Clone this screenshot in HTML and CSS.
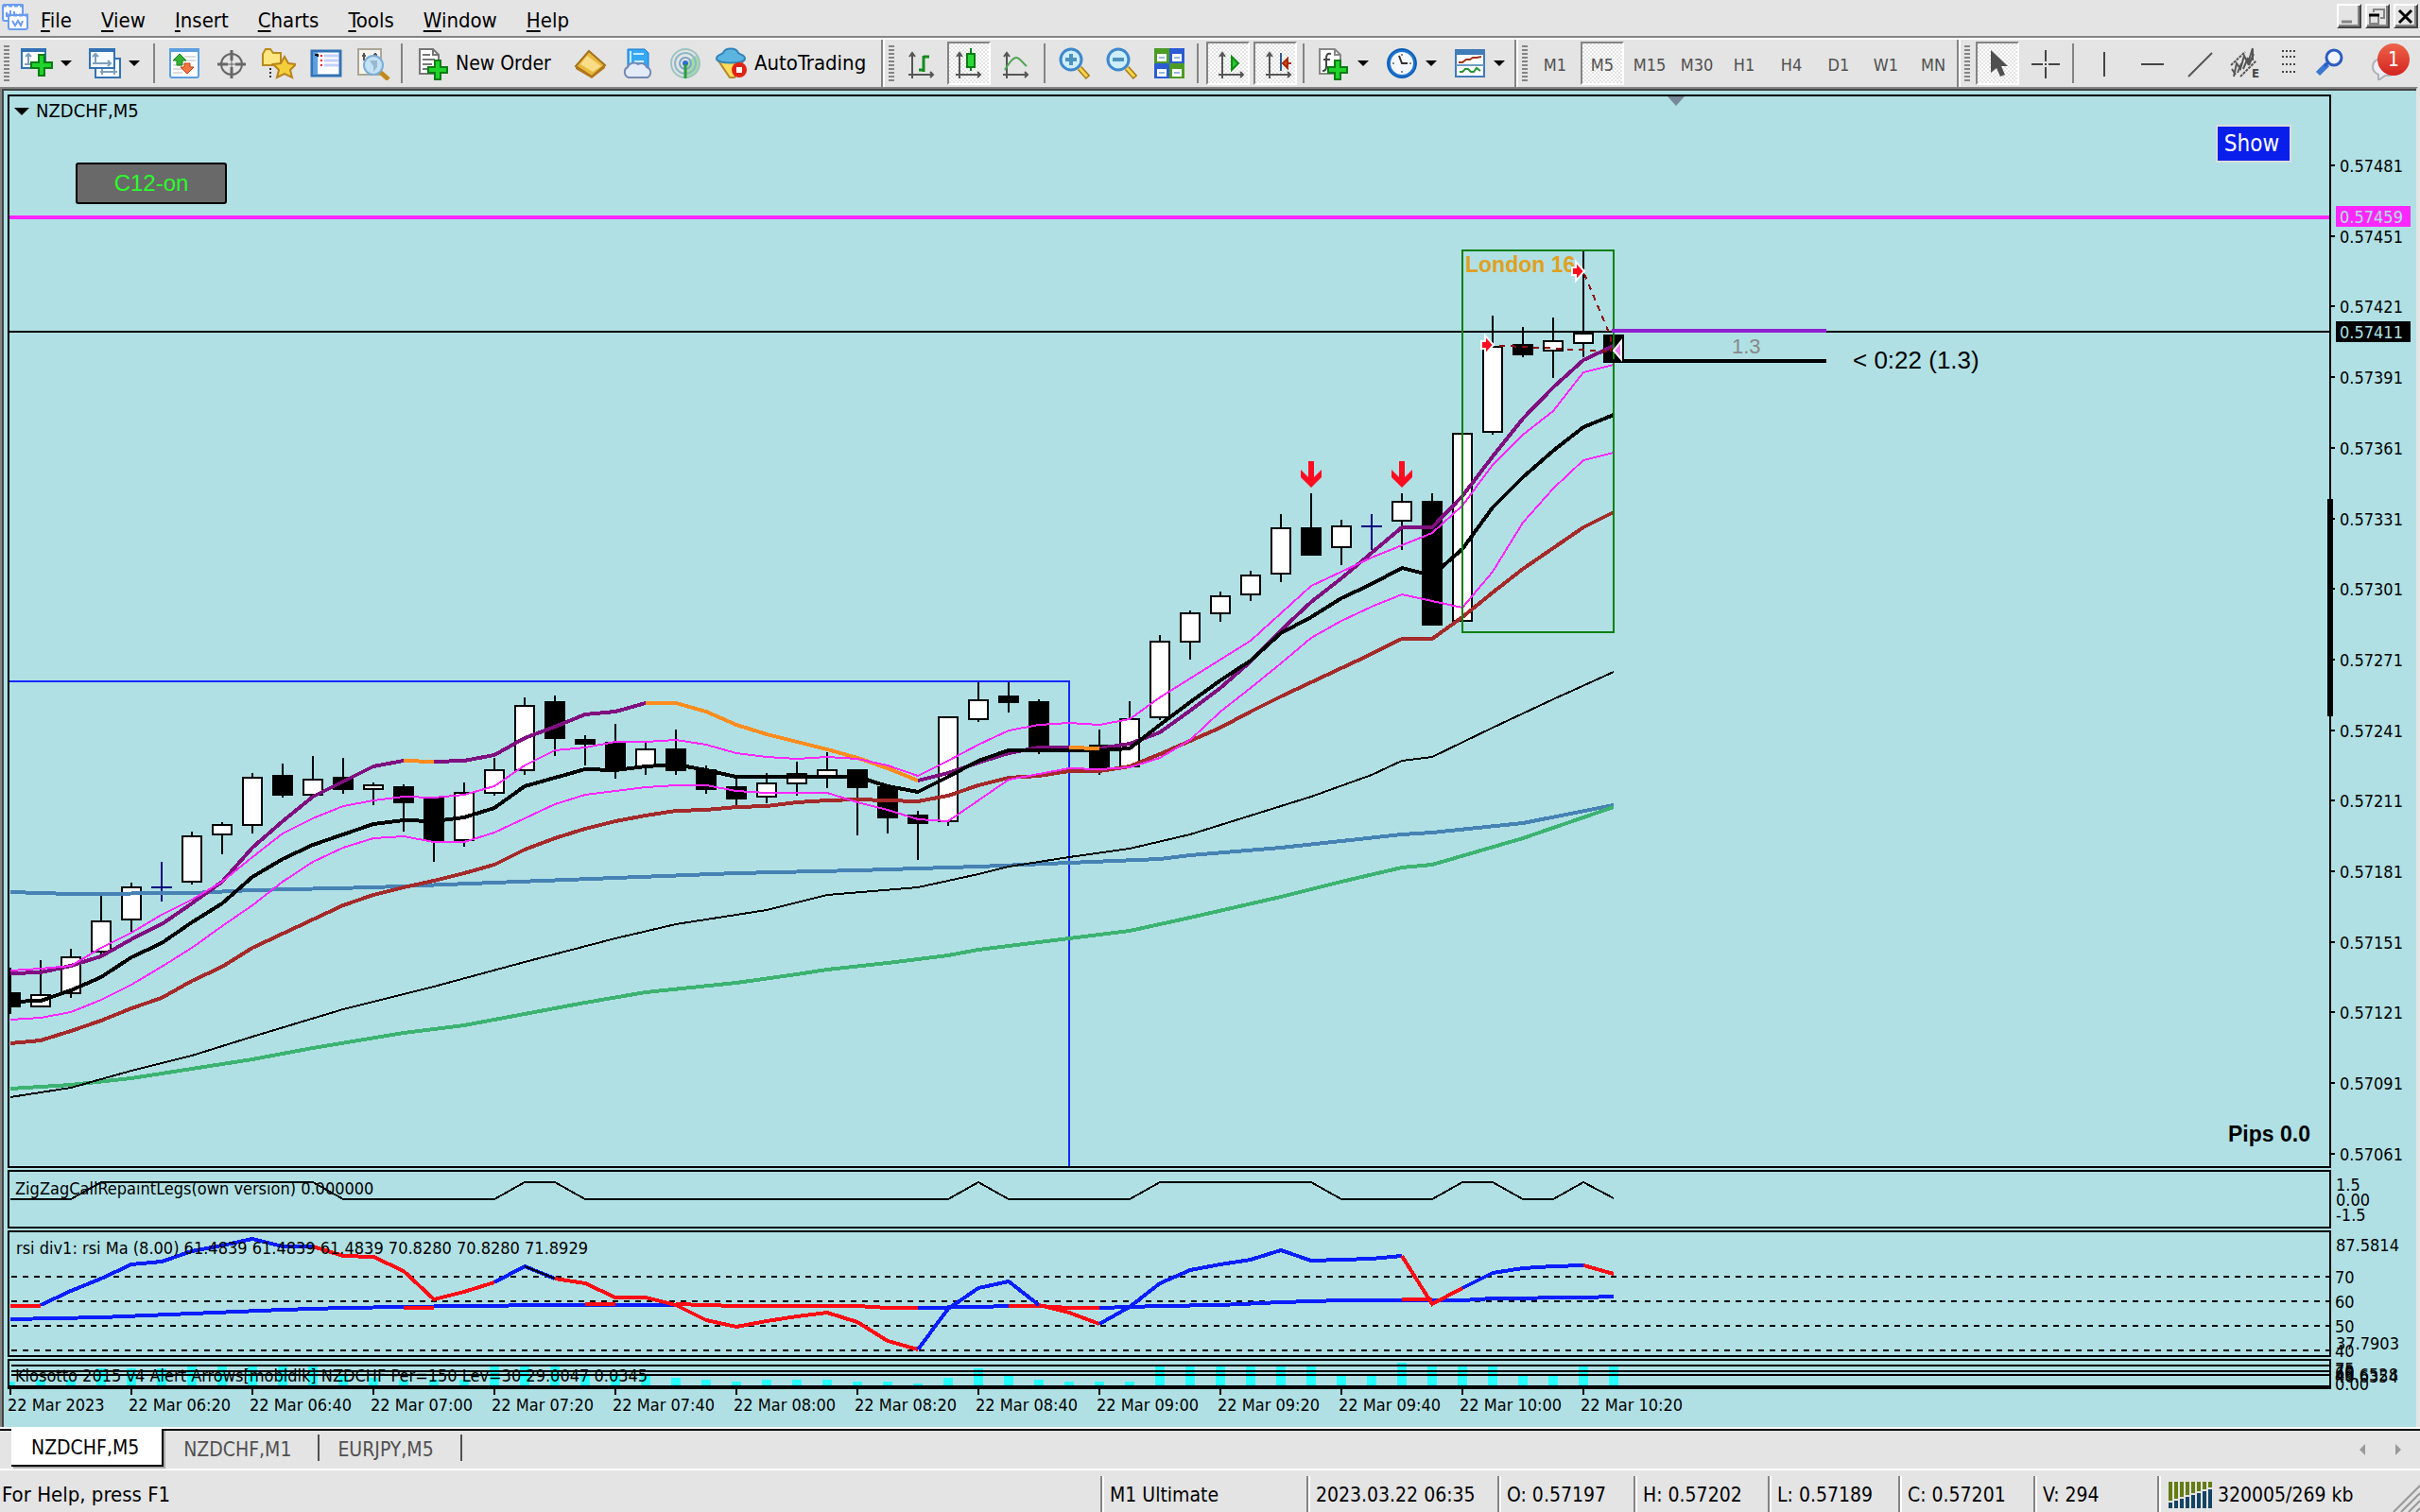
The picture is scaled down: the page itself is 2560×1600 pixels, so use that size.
FILE: index.html
```html
<!DOCTYPE html>
<html lang="en">

<head>
    <meta charset="UTF-8">
    <meta name="viewport" content="width=device-width, initial-scale=1.0">
    <title>NZDCHF,M5</title>
    <link rel="stylesheet" href="styles.css">
</head>

<body>
    <header class="menubar">
        <svg class="app-icon" width="28" height="28" viewBox="0 0 28 28">
            <rect x="1" y="1" width="21" height="17" rx="2" fill="#fff" stroke="#6a9cf0" stroke-width="2"/>
            <path d="M1 2h22" stroke="#6a9cf0" stroke-width="3" stroke-dasharray="4 2"/>
            <path d="M5 14v-5M9 12V7M13 12V8" stroke="#6a9cf0" stroke-width="2"/>
            <rect x="7" y="12" width="20" height="15" rx="2" fill="#fff" stroke="#6a9cf0" stroke-width="2"/>
            <path d="M6 12h22" stroke="#6a9cf0" stroke-width="3" stroke-dasharray="4 2"/>
            <path d="M11 18l3 5 3-5 3 5 2-5" fill="none" stroke="#6a9cf0" stroke-width="2"/>
        </svg>
        <nav class="menu">
            <button><u>F</u>ile</button>
            <button><u>V</u>iew</button>
            <button><u>I</u>nsert</button>
            <button><u>C</u>harts</button>
            <button><u>T</u>ools</button>
            <button><u>W</u>indow</button>
            <button><u>H</u>elp</button>
        </nav>
        <div class="window-buttons">
            <button aria-label="Minimize"><svg width="22" height="22"><path d="M3 17h11" stroke="#848484" stroke-width="3"/></svg></button>
            <button aria-label="Restore"><svg width="22" height="22"><path d="M7 7V4h11v9h-4" fill="none" stroke="#848484" stroke-width="2"/><path d="M3 10v9h9v-9" fill="none" stroke="#848484" stroke-width="2"/><path d="M2 10h11" stroke="#000" stroke-width="3"/></svg></button>
            <button aria-label="Close"><svg width="22" height="22"><path d="M4 5l13 13M17 5L4 18" stroke="#000" stroke-width="3"/></svg></button>
        </div>
    </header>

    <div class="toolbar">
        <div class="band">
            <span class="grip"></span>
            <button class="tool drop" aria-label="New chart">
                <svg width="36" height="36">
                    <rect x="1" y="3" width="25" height="20" fill="#fff" stroke="#3272b4" stroke-width="2"/>
                    <path d="M1 4h26" stroke="#3272b4" stroke-width="4"/>
                    <path d="M8 8v12M4 19h12M5 11l3-3 3 3" fill="none" stroke="#7da0bd" stroke-width="2"/>
                    <path d="M19 9h6v8h8v6h-8v8h-6v-8h-8v-6h8z" fill="#1fd32b" stroke="#0b7d14" stroke-width="2"/>
                </svg>
                <i class="arrow"></i>
            </button>
            <button class="tool drop" aria-label="Profiles">
                <svg width="36" height="36">
                    <rect x="7" y="13" width="26" height="20" fill="#fff" stroke="#3272b4" stroke-width="2"/>
                    <path d="M12 27h18M14 24v6M27 24v6" stroke="#7da0bd" stroke-width="2"/>
                    <rect x="1" y="3" width="26" height="20" fill="#f4faff" stroke="#3272b4" stroke-width="2"/>
                    <path d="M1 4h26" stroke="#3272b4" stroke-width="4"/>
                    <path d="M7 9v10M4 18h18M4 11l3-3 3 3M20 15l3 3-3 3" fill="none" stroke="#7da0bd" stroke-width="2"/>
                </svg>
                <i class="arrow"></i>
            </button>
            <span class="sep"></span>
            <button class="tool" aria-label="Market watch">
                <svg width="36" height="36">
                    <rect x="3" y="3" width="30" height="30" rx="2" fill="#fff" stroke="#5b9fe0" stroke-width="2"/>
                    <path d="M2 4h32" stroke="#5b9fe0" stroke-width="4"/>
                    <path d="M18 11h12M18 15h12M6 20h10M6 24h10M6 28h10" stroke="#dcdcdc" stroke-width="2"/>
                    <path d="M13 8l7 7h-4v5h-6v-5H6z" fill="#35b335" stroke="#188018" stroke-width="1"/>
                    <path d="M21 29l-7-7h4v-4h6v4h4z" fill="#f07840" stroke="#c83c10" stroke-width="1"/>
                </svg>
            </button>
            <button class="tool" aria-label="Data window">
                <svg width="36" height="36" fill="none" stroke="#666" stroke-width="2">
                    <circle cx="18" cy="19" r="11"/>
                    <path d="M18 4v11M18 22v12M3 19h11M22 19h11" stroke-width="3"/>
                    <path d="M18 15v8M14 19h8" stroke-width="1"/>
                </svg>
            </button>
            <button class="tool" aria-label="Navigator">
                <svg width="36" height="36">
                    <path d="M1 8l3-5h5l3 4h8v13H1z" fill="#ffe680" stroke="#b98a1c" stroke-width="2"/>
                    <path d="M9 23v12" stroke="#333" stroke-width="2" stroke-dasharray="2 2"/>
                    <path d="M24 11l4 7 8 1-6 6 2 8-8-4-8 4 2-8-6-6 8-1z" fill="#f4cf3c" stroke="#b9821c" stroke-width="2"/>
                </svg>
            </button>
            <button class="tool" aria-label="Terminal">
                <svg width="36" height="36">
                    <rect x="3" y="5" width="30" height="26" fill="#fff" stroke="#3272b4" stroke-width="3"/>
                    <rect x="4" y="6" width="5" height="24" fill="#5b9fe0"/>
                    <path d="M16 10h15M16 15h15M16 20h15" stroke="#c4d0ff" stroke-width="3"/>
                    <path d="M13 9v13" stroke="#f01030" stroke-width="2" stroke-dasharray="2 3"/>
                    <path d="M7 8v2M9 8v3" stroke="#000" stroke-width="2"/>
                </svg>
            </button>
            <button class="tool" aria-label="Strategy tester">
                <svg width="36" height="36">
                    <rect x="2" y="3" width="24" height="27" fill="#f6f4ec" stroke="#aaa696" stroke-width="2"/>
                    <path d="M8 7v8M6 10h4M20 7v8M18 9h4" stroke="#555" stroke-width="2"/>
                    <path d="M25 27l9 8" stroke="#c08a1c" stroke-width="5"/>
                    <circle cx="18" cy="20" r="10" fill="#c4e2f6" stroke="#7cacd8" stroke-width="2"/>
                    <path d="M14 15h8v7l-4 5v-6" fill="#9ab8ce"/>
                </svg>
            </button>
            <span class="sep"></span>
            <button class="tool wide order">
                <svg width="36" height="36">
                    <path d="M2 3h14l6 6v20H2z" fill="#fff" stroke="#777" stroke-width="2"/>
                    <path d="M16 3v6h6M5 9h8M5 14h13M5 19h10M5 24h8" fill="none" stroke="#777" stroke-width="2"/>
                    <path d="M18 15h6v7h7v6h-7v7h-6v-7h-7v-6h7z" fill="#1fd32b" stroke="#0b7d14" stroke-width="2"/>
                </svg>
                New Order
            </button>
            <button class="tool" aria-label="MetaEditor">
                <svg width="36" height="36">
                    <path d="M16 5l17 15-14 12L2 21z" fill="#e8b83c" stroke="#a4701c" stroke-width="2"/>
                    <path d="M14 10l15 11-9 6L7 19z" fill="#f8dc88"/>
                    <path d="M2 21l17 11 14-12v3L19 34 2 24z" fill="#b4781c"/>
                </svg>
            </button>
            <button class="tool" aria-label="Market">
                <svg width="36" height="36">
                    <path d="M7 3h18l4 4v18H7z" fill="#36a8f4" stroke="#1878d0" stroke-width="1"/>
                    <path d="M10 5v16M13 8h11M14 16h10" stroke="#c8ecff" stroke-width="2"/>
                    <path d="M8 33a6 6 0 0 1-1-11 7 7 0 0 1 11-3 6 6 0 0 1 9 3 6 6 0 0 1 1 11z" fill="#e4ebf8" stroke="#7488b4" stroke-width="2"/>
                </svg>
            </button>
            <button class="tool" aria-label="Signals">
                <svg width="36" height="36" fill="none" stroke-width="2">
                    <path d="M18 18v16a16 16 0 0 0 12-25z" fill="#a4dca4"/>
                    <circle cx="18" cy="18" r="15" stroke="#9cc4c0"/>
                    <circle cx="18" cy="18" r="11" stroke="#8cb8c8"/>
                    <circle cx="18" cy="18" r="6" stroke="#78a4cc"/>
                    <circle cx="18" cy="18" r="3" fill="#2c6cd0"/>
                    <path d="M18 19v15" stroke="#2c9c3c" stroke-width="3"/>
                </svg>
            </button>
            <button class="tool wide auto">
                <svg width="36" height="36">
                    <path d="M3 14h28l-10 19h-5z" fill="#fcdc5c" stroke="#b48a28" stroke-width="2"/>
                    <path d="M2 13c0-4 5-4 7-6 2-6 14-6 16 0 2 2 7 2 7 6 0 6-30 6-30 0z" fill="#5cb4e0" stroke="#3484b8" stroke-width="2"/>
                    <circle cx="26" cy="25" r="8" fill="#e02414"/>
                    <rect x="23" y="22" width="6" height="6" fill="#fff"/>
                </svg>
                AutoTrading
            </button>
        </div>

        <div class="band">
            <span class="grip"></span>
            <button class="tool" aria-label="Bar chart">
                <svg width="36" height="36" fill="none" stroke="#555" stroke-width="2">
                    <path d="M8 8v26M4 30h26M5 11l3-4 3 4M27 27l3 3-3 3"/>
                    <path d="M15 25h6M20 27V10M20 11h6" stroke="#148c1c" stroke-width="3"/>
                </svg>
            </button>
            <button class="tool on" aria-label="Candlesticks">
                <svg width="36" height="36" fill="none" stroke="#555" stroke-width="2">
                    <path d="M8 8v26M4 30h26M5 11l3-4 3 4M27 27l3 3-3 3"/>
                    <path d="M20 2v24" stroke="#0c7c14"/>
                    <rect x="16" y="8" width="8" height="14" fill="#2cd838" stroke="#0c7c14"/>
                </svg>
            </button>
            <button class="tool" aria-label="Line chart">
                <svg width="36" height="36" fill="none" stroke="#555" stroke-width="2">
                    <path d="M8 8v26M4 30h26M5 11l3-4 3 4M27 27l3 3-3 3"/>
                    <path d="M6 25c4-7 8-13 12-13s6 5 11 9" stroke="#4ca454"/>
                </svg>
            </button>
            <span class="sep"></span>
            <button class="tool" aria-label="Zoom in">
                <svg width="36" height="36" fill="none">
                    <path d="M23 23l9 10" stroke="#a87c14" stroke-width="6"/><path d="M23 23l8 9" stroke="#f8d44c" stroke-width="3"/>
                    <circle cx="14" cy="14" r="11" fill="#cdeefc" stroke="#3f88cc" stroke-width="3"/>
                    <path d="M14 8v12M8 14h12" stroke="#4c94bc" stroke-width="4"/>
                </svg>
            </button>
            <button class="tool" aria-label="Zoom out">
                <svg width="36" height="36" fill="none">
                    <path d="M23 23l9 10" stroke="#a87c14" stroke-width="6"/><path d="M23 23l8 9" stroke="#f8d44c" stroke-width="3"/>
                    <circle cx="14" cy="14" r="11" fill="#cdeefc" stroke="#3f88cc" stroke-width="3"/>
                    <path d="M8 14h12" stroke="#4c94bc" stroke-width="4"/>
                </svg>
            </button>
            <button class="tool" aria-label="Tile windows">
                <svg width="36" height="36">
                    <path d="M2 2h16v16H2zM18 18h16v16H18z" fill="#4c9c24"/>
                    <path d="M18 2h16v16H18zM2 18h16v16H2z" fill="#2c5cd4"/>
                    <path d="M5 8h10v8H5zM21 8h10v8H21zM5 24h10v8H5zM21 24h10v8H21z" fill="#fff"/>
                    <path d="M7 12h6M23 12h6M7 28h6M23 28h6" stroke="#98b8e0" stroke-width="2"/>
                </svg>
            </button>
            <span class="sep"></span>
            <button class="tool on" aria-label="Auto scroll">
                <svg width="36" height="36" fill="none" stroke="#555" stroke-width="2">
                    <path d="M12 8v26M8 30h26M9 11l3-4 3 4M31 27l3 3-3 3"/>
                    <path d="M22 11v14l7-7z" fill="#2cc838" stroke="#0c8c14"/>
                </svg>
            </button>
            <button class="tool on" aria-label="Chart shift">
                <svg width="36" height="36" fill="none" stroke="#555" stroke-width="2">
                    <path d="M12 8v26M8 30h26M9 11l3-4 3 4M31 27l3 3-3 3"/>
                    <path d="M24 7v19" stroke="#2c5c8c"/>
                    <path d="M35 18h-5M31 13l-5 5 5 5z" fill="#e84818" stroke="#a42c08"/>
                </svg>
            </button>
            <span class="sep"></span>
            <button class="tool drop" aria-label="Indicators">
                <svg width="36" height="36">
                    <path d="M2 3h16l6 6v20H2z" fill="#fff" stroke="#888" stroke-width="2"/>
                    <path d="M18 3v6h6" fill="none" stroke="#888" stroke-width="2"/>
                    <path d="M14 8c-4-1-5 1-5 5v9c0 3-1 4-4 4M6 14h7" fill="none" stroke="#444" stroke-width="2"/>
                    <path d="M18 15h6v7h7v6h-7v7h-6v-7h-7v-6h7z" fill="#1fd32b" stroke="#0b7d14" stroke-width="2"/>
                </svg>
                <i class="arrow"></i>
            </button>
            <button class="tool drop" aria-label="Periods">
                <svg width="36" height="36">
                    <circle cx="17" cy="18" r="14" fill="#f4f8fc" stroke="#1c74d0" stroke-width="4"/>
                    <circle cx="17" cy="18" r="15" fill="none" stroke="#0c50a0" stroke-width="1"/>
                    <path d="M17 8v2M17 26v2M7 18h2M25 18h2" stroke="#888" stroke-width="2"/>
                    <path d="M14 10l3 8h6" fill="none" stroke="#333" stroke-width="2"/>
                </svg>
                <i class="arrow"></i>
            </button>
            <button class="tool drop" aria-label="Templates">
                <svg width="36" height="36">
                    <rect x="2" y="4" width="30" height="28" fill="#fff" stroke="#3f7cb8" stroke-width="2"/>
                    <path d="M1 6h32" stroke="#3f7cb8" stroke-width="6"/>
                    <path d="M2 20h30" stroke="#6c9cc4" stroke-width="2"/>
                    <path d="M5 17h4l4-3h4l3-2h4l5-1" fill="none" stroke="#a03414" stroke-width="2"/>
                    <path d="M6 27h3l3-3h3l3 3h3l3-4 4 3" fill="none" stroke="#249434" stroke-width="2"/>
                </svg>
                <i class="arrow"></i>
            </button>
        </div>

        <div class="band">
            <span class="grip"></span>
            <button class="tool tf">M1</button>
            <button class="tool tf on">M5</button>
            <button class="tool tf">M15</button>
            <button class="tool tf">M30</button>
            <button class="tool tf">H1</button>
            <button class="tool tf">H4</button>
            <button class="tool tf">D1</button>
            <button class="tool tf">W1</button>
            <button class="tool tf">MN</button>
        </div>

        <div class="band">
            <span class="grip"></span>
            <button class="tool on" aria-label="Cursor">
                <svg width="36" height="36"><path d="M11 4v24l6-5 4 9 5-2-4-9h7z" fill="#505050"/></svg>
            </button>
            <button class="tool" aria-label="Crosshair">
                <svg width="36" height="36" stroke="#444" stroke-width="2"><path d="M19 4v12M19 22v12M4 19h12M22 19h12M18 19h2"/></svg>
            </button>
            <span class="sep"></span>
            <button class="tool" aria-label="Vertical line">
                <svg width="36" height="36" stroke="#444" stroke-width="2"><path d="M19 6v26"/></svg>
            </button>
            <button class="tool" aria-label="Horizontal line">
                <svg width="36" height="36" stroke="#444" stroke-width="2"><path d="M8 19h24"/></svg>
            </button>
            <button class="tool" aria-label="Trendline">
                <svg width="36" height="36" stroke="#555" stroke-width="2"><path d="M8 32L33 7"/></svg>
            </button>
            <button class="tool" aria-label="Equidistant channel">
                <svg width="36" height="36" fill="none" stroke="#555" stroke-width="2">
                    <path d="M3 20L18 6M13 32l17-17" stroke-dasharray="3 1"/>
                    <path d="M6 32l3-14 4 6 4-14 4 8 5-16M10 28l4-10M16 24l5-12M22 20l5-12M4 24l4 6M26 3v12"/>
                    <text class="glyph" x="25" y="33">E</text>
                </svg>
            </button>
            <button class="tool narrow" aria-label="Fibonacci">
                <svg width="36" height="36" stroke="#444" stroke-width="2" stroke-dasharray="2 2"><path d="M11 5h15M11 11h15M11 19h15M11 27h15"/></svg>
            </button>
            <button class="tool" aria-label="Search">
                <svg width="36" height="36" fill="none" stroke="#2c5cc0">
                    <path d="M3 29l10-10" stroke-width="6" stroke="#3c78d0"/><path d="M10 21l6-6" stroke-width="3"/>
                    <circle cx="20" cy="12" r="8" fill="#f0f4ff" stroke-width="3"/>
                </svg>
            </button>
            <button class="tool chat" aria-label="Chat">
                <svg width="36" height="36"><path d="M3 22c0-14 26-12 26 0 0 8-8 9-13 9l-7 5 0-6c-4-2-6-4-6-8z" fill="#eceef4" stroke="#b0b0b8" stroke-width="2"/></svg>
                <span class="badge">1</span>
            </button>
        </div>
    </div>

    <main class="chart">
        <section class="row row-price">
            <div class="pane">
                <svg id="price"></svg>
                <button class="c12">C12-on</button>
                <button class="show">Show</button>
            </div>
            <svg class="axis" id="price-axis"></svg>
        </section>
        <section class="row row-zigzag">
            <div class="pane"><svg id="zigzag"></svg></div>
            <svg class="axis" id="zigzag-axis"></svg>
        </section>
        <section class="row row-rsi">
            <div class="pane"><svg id="rsi"></svg></div>
            <svg class="axis" id="rsi-axis"></svg>
        </section>
        <section class="row row-alert">
            <div class="pane"><svg id="alert"></svg></div>
            <svg class="axis" id="alert-axis"></svg>
        </section>
        <div class="times">
            <span>22 Mar 2023</span>
            <span>22 Mar 06:20</span>
            <span>22 Mar 06:40</span>
            <span>22 Mar 07:00</span>
            <span>22 Mar 07:20</span>
            <span>22 Mar 07:40</span>
            <span>22 Mar 08:00</span>
            <span>22 Mar 08:20</span>
            <span>22 Mar 08:40</span>
            <span>22 Mar 09:00</span>
            <span>22 Mar 09:20</span>
            <span>22 Mar 09:40</span>
            <span>22 Mar 10:00</span>
            <span>22 Mar 10:20</span>
        </div>
    </main>

    <nav class="tabs">
        <button class="tab active">NZDCHF,M5</button>
        <button class="tab">NZDCHF,M1</button>
        <button class="tab">EURJPY,M5</button>
        <div class="tab-scroll">
            <button aria-label="Previous"><svg width="6" height="12"><path d="M6 0v12L0 6z" fill="#999"/></svg></button>
            <button aria-label="Next"><svg width="6" height="12"><path d="M0 0v12l6-6z" fill="#999"/></svg></button>
        </div>
    </nav>

    <footer class="status">
        <span>For Help, press F1</span>
        <span>M1 Ultimate</span>
        <span>2023.03.22 06:35</span>
        <span>O: 0.57197</span>
        <span>H: 0.57202</span>
        <span>L: 0.57189</span>
        <span>C: 0.57201</span>
        <span>V: 294</span>
        <span class="traffic">
            <svg width="46" height="28" id="traffic"></svg>
            320005/269 kb
        </span>
        <svg class="resize" width="30" height="30" stroke="#999" stroke-width="2"><path d="M2 30L30 2M10 30L30 10M18 30L30 18M26 30l4-4"/></svg>
    </footer>

    <script src="chart.js"></script>
</body>

</html>
```
FILE: styles.css
```css
*,
*::before,
*::after {
    box-sizing: border-box;
}

body {
    display: flex;
    flex-direction: column;
    height: 100vh;
    margin: 0;
    overflow: hidden;
    background-color: #e4e4e4;
    color: #000;
    font-family: "DejaVu Sans Condensed", "Open Sans", sans-serif;
    font-size: 21px;
    line-height: 24px;
}

button {
    padding: 0;
    border: none;
    background: none;
    color: inherit;
    font: inherit;
    white-space: nowrap;
}

svg {
    display: block;
}

/* menu */

.menubar {
    display: flex;
    align-items: center;
    height: 42px;
    padding: 0 2px;
    border-bottom: 2px solid #fff;
    box-shadow: inset 0 -2px #848484;
}

.app-icon {
    margin-top: -4px;
}

.menu {
    display: flex;
    flex: 1;
    font-size: 22px;
}

.menu button {
    padding: 4px 18px 0 13px;
}

.menu u {
    text-decoration-thickness: 2px;
    text-underline-offset: 3px;
}

.window-buttons {
    display: flex;
    gap: 4px;
    margin-top: -6px;
}

.window-buttons button {
    width: 26px;
    height: 26px;
    border: 2px solid;
    border-color: #fff #444 #444 #fff;
    box-shadow: inset -2px -2px #848484;
}

/* toolbar */

.toolbar {
    display: flex;
    height: 50px;
}

.band {
    display: flex;
    align-items: center;
    gap: 4px;
    padding: 0 2px;
    border-right: 2px solid #848484;
}

.band + .band {
    border-left: 2px solid #fff;
}

.band:last-child {
    flex: 1;
    border-right: none;
}

.grip {
    width: 6px;
    height: 38px;
    margin: 0 2px;
    background: repeating-linear-gradient(#848484 0 2px, transparent 2px 4px);
}

.sep {
    width: 2px;
    height: 42px;
    margin: 0 4px 0 2px;
    background-color: #848484;
}

.tool {
    display: flex;
    align-items: center;
    justify-content: center;
    width: 46px;
    height: 46px;
}

.tool.drop {
    justify-content: flex-start;
    gap: 6px;
    width: 68px;
    padding-left: 6px;
}

.tool.wide {
    justify-content: flex-start;
    gap: 4px;
    padding-left: 8px;
}

.tool.order {
    width: 164px;
}

.tool.auto {
    width: 178px;
    padding-left: 4px;
    gap: 6px;
    font-size: 22px;
}

.tool.narrow {
    width: 38px;
}

.tool.on {
    border: 2px solid;
    border-color: #848484 #fff #fff #848484;
    background: repeating-conic-gradient(#fff 0 25%, #e4e4e4 0 50%) 0 0 / 4px 4px;
}

.tool.tf {
    padding-top: 3px;
    color: #505050;
    font-size: 18px;
}

.arrow {
    border: 6px solid transparent;
    border-top-color: #000;
    border-bottom: none;
}

.tool.chat {
    position: relative;
    width: 62px;
}

.badge {
    position: absolute;
    top: 2px;
    right: 7px;
    width: 34px;
    height: 34px;
    border-radius: 50%;
    background: linear-gradient(#ec6448, #d42420);
    color: #fff;
    line-height: 34px;
    text-align: center;
}

.glyph {
    fill: #444;
    stroke: none;
    font-size: 13px;
    font-weight: bold;
}

/* chart */

.chart {
    display: flex;
    flex: 1;
    flex-direction: column;
    gap: 2px;
    min-height: 0;
    margin-right: 2px;
    padding: 6px 0 0 6px;
    border: 2px solid;
    border-color: #848484 #e4e4e4 #e4e4e4 #848484;
    background-color: #b0e0e4;
    box-shadow: inset 2px 2px #444;
    font-size: 18px;
}

.row {
    display: flex;
}

.row-price {
    flex: 1;
    min-height: 0;
}

.row-zigzag {
    height: 62px;
}

.row-rsi {
    height: 134px;
}

.row-alert {
    height: 32px;
}

.pane {
    position: relative;
    flex: 1;
    border: 2px solid #000;
}

.row-alert .pane {
    border-bottom-width: 4px;
}

.pane svg {
    width: 100%;
    height: 100%;
}

.axis {
    width: 90px;
    height: 100%;
    overflow: visible;
}

.c12 {
    position: absolute;
    top: 70px;
    left: 70px;
    width: 160px;
    height: 44px;
    border: 2px solid #000;
    border-radius: 3px;
    background-color: #696969;
    color: #28ff28;
    font-family: "Liberation Sans", sans-serif;
    font-size: 24px;
}

.show {
    position: absolute;
    top: 30px;
    right: 40px;
    width: 80px;
    height: 40px;
    padding-right: 4px;
    border: 2px solid #dcdcdc;
    background-color: #0a1eeb;
    color: #fff;
    font-size: 24px;
}

.times {
    display: flex;
    height: 40px;
    margin-top: -2px;
}

.times span {
    width: 128px;
    white-space: nowrap;
    line-height: 22px;
}

.times span::before {
    display: block;
    width: 2px;
    height: 6px;
    margin-left: 2px;
    background-color: #000;
    content: "";
}

/* svg parts */

.crisp {
    shape-rendering: crispEdges;
}

.line {
    fill: none;
    stroke-width: 4;
}

.thin {
    stroke-width: 2;
}

.arial {
    font-family: "Liberation Sans", sans-serif;
}

/* tabs */

.tabs {
    display: flex;
    height: 44px;
    border-top: 2px solid #000;
    border-bottom: 2px solid #fff;
    box-shadow: 0 -2px #fff;
}

.tab {
    position: relative;
    height: 40px;
    padding: 0 28px 0 21px;
    color: #505050;
}

.tab::after {
    position: absolute;
    top: 4px;
    right: -2px;
    width: 2px;
    height: 28px;
    background-color: #505050;
    content: "";
}

.tab.active {
    margin: -2px 0 0 12px;
    padding: 2px 24px 0 21px;
    border-right: 2px solid #000;
    border-bottom: 2px solid #000;
    background-color: #fff;
    box-shadow: 2px 2px #aaa;
    color: #000;
}

.tab.active::after {
    display: none;
}

.tab-scroll {
    display: flex;
    gap: 32px;
    margin-left: auto;
    padding-right: 20px;
}

/* status bar */

.status {
    position: relative;
    display: grid;
    grid-template-columns: 1fr 218px 202px 144px 142px 138px 143px 131px 278px;
    height: 44px;
    padding: 6px 0 2px;
}

.status > span {
    padding-left: 8px;
    border-left: 2px solid #848484;
    box-shadow: inset 2px 0 #fff;
    line-height: 40px;
    white-space: nowrap;
}

.status > span:first-child {
    padding-left: 2px;
    border: none;
    box-shadow: none;
    font-size: 22px;
}

.status .traffic {
    display: flex;
    align-items: center;
    gap: 6px;
    padding-left: 10px;
}

.resize {
    position: absolute;
    right: 0;
    bottom: 0;
}
```
FILE: chart.js
```js
// one bar every 32 units, first bar at x = 11
const X = i => 11 + 32 * i;

const plots = {
    price: [-10, -102], zigzag: [-10, -1240], rsi: [-10, -1304], alert: [-10, -1440],
    "price-axis": [-2466, -100], "zigzag-axis": [-2466, -1238], "rsi-axis": [-2466, -1302], "alert-axis": [-2466, -1438]
};
const out = {};
for (const id in plots) out[id] = "";

function rect(id, x, y, w, h, fill, extra = "") {
    out[id] += `<rect class="crisp" x="${x}" y="${y}" width="${w}" height="${h}" fill="${fill}" ${extra}/>`;
}

function text(id, x, y, str, extra = "") {
    out[id] += `<text x="${x}" y="${y}" ${extra}>${str}</text>`;
}

// every bar from bar "from"
function line(id, color, from, ys, cls = "") {
    const pts = ys.map((y, k) => X(from + k) + "," + y).join(" ");
    out[id] += `<polyline class="line crisp ${cls}" stroke="${color}" points="${pts}"/>`;
}

// only the listed bars: [bar, y, bar, y, ...]
function sparse(id, color, list, cls = "") {
    let pts = "";
    for (let k = 0; k < list.length; k += 2) pts += X(list[k]) + "," + list[k + 1] + " ";
    out[id] += `<polyline class="line crisp ${cls}" stroke="${color}" points="${pts}"/>`;
}

// ---- price pane ----
rect("price", 8, 720, 1124, 2, "#1428ff");
rect("price", 1130, 720, 2, 2000, "#1428ff");
rect("price", 0, 350, 4000, 2, "#000");
text("price", 1550, 288, "London 16", 'class="arial" font-size="23" font-weight="bold" fill="#e0a020"');

// [bar, w = up / b = down / d = doji, body top, body bottom, high, low]
const candles = [
    [0, "b", 1050, 1066, 1024, 1073], [1, "w", 1052, 1066, 1016, 1066], [2, "w", 1012, 1052, 1004, 1056],
    [3, "w", 974, 1008, 948, 1010], [4, "w", 938, 974, 934, 986], [5, "d", 938, 940, 912, 954],
    [6, "w", 884, 934, 880, 936], [7, "w", 872, 884, 870, 904], [8, "w", 822, 874, 818, 882],
    [9, "b", 820, 842, 808, 844], [10, "w", 824, 842, 800, 842], [11, "b", 822, 836, 802, 840],
    [12, "w", 830, 836, 828, 852], [13, "b", 832, 850, 830, 880], [14, "b", 844, 890, 844, 912],
    [15, "w", 838, 890, 828, 896], [16, "w", 814, 840, 802, 842], [17, "w", 746, 816, 738, 820],
    [18, "b", 742, 782, 736, 800], [19, "b", 782, 788, 778, 810], [20, "b", 785, 816, 766, 824],
    [21, "w", 792, 812, 786, 820], [22, "b", 792, 816, 772, 820], [23, "b", 814, 836, 810, 840],
    [24, "b", 832, 846, 824, 852], [25, "w", 828, 844, 818, 850], [26, "w", 818, 830, 806, 842],
    [27, "w", 814, 822, 796, 834], [28, "b", 814, 834, 814, 884], [29, "b", 832, 866, 832, 882],
    [30, "b", 862, 872, 858, 910], [31, "w", 758, 870, 758, 874], [32, "w", 740, 762, 722, 764],
    [33, "b", 736, 744, 722, 754], [34, "b", 742, 792, 740, 798], [36, "b", 788, 816, 772, 820],
    [37, "w", 760, 812, 742, 812], [38, "w", 678, 760, 672, 762], [39, "w", 648, 680, 646, 698],
    [40, "w", 630, 650, 626, 658], [41, "w", 608, 630, 604, 636], [42, "w", 558, 608, 544, 616],
    [43, "b", 558, 588, 522, 588], [44, "w", 556, 580, 550, 598], [45, "d", 556, 558, 544, 582],
    [46, "w", 530, 552, 522, 582], [47, "b", 530, 662, 522, 662], [48, "w", 458, 658, 458, 658],
    [49, "w", 366, 458, 334, 460], [50, "b", 364, 376, 346, 378], [51, "w", 360, 372, 336, 400],
    [52, "w", 352, 364, 266, 378], [53, "b", 354, 384, 354, 384]
];
for (const [i, kind, top, bottom, high, low] of candles) {
    const color = kind == "d" ? "#000080" : "#000";
    rect("price", X(i) - 1, high, 2, low - high, color);
    rect("price", X(i) - 11, top, 22, bottom - top, color);
    if (kind == "w") rect("price", X(i) - 9, top + 2, 18, bottom - top - 4, "#fff");
}

const magenta = "#ff26ff", purple = "#800f80", orange = "#ff8c1e";
sparse("price", "#4682b4", [0, 944, 2, 946, 6, 945, 8, 942, 12, 939, 16, 934, 20, 929, 24, 924, 28, 921, 32, 917, 35, 913, 38, 909, 39, 905, 42, 897, 46, 883, 47, 881, 50, 871, 53, 852]);
sparse("price", "#3cb371", [0, 1152, 2, 1148, 4, 1141, 6, 1131, 8, 1121, 10, 1109, 13, 1093, 15, 1085, 17, 1073, 19, 1061, 21, 1050, 24, 1040, 26, 1031, 27, 1026, 29, 1019, 31, 1011, 32, 1005, 34, 997, 36, 989, 37, 985, 39, 971, 42, 949, 44, 933, 46, 918, 47, 915, 50, 887, 53, 854]);
sparse("price", "#000", [0, 1161, 2, 1151, 4, 1133, 6, 1117, 8, 1097, 11, 1068, 14, 1044, 17, 1018, 20, 993, 22, 978, 25, 963, 27, 947, 30, 939, 32, 925, 33, 917, 35, 907, 37, 898, 39, 883, 41, 863, 43, 843, 45, 820, 46, 805, 47, 801, 49, 770, 51, 740, 53, 711], "thin");
line("price", "#a52a2a", 0, [1104, 1101, 1091, 1080, 1067, 1056, 1038, 1023, 1003, 988, 973, 958, 947, 939, 932, 924, 915, 899, 887, 877, 869, 863, 858, 857, 854, 853, 849, 847, 846, 847, 848, 842, 831, 823, 821, 816, 816, 811, 798, 784, 770, 753, 737, 722, 707, 692, 676, 676, 653, 627, 602, 580, 558, 542]);
line("price", purple, 0, [1030, 1029, 1022, 1012, 994, 978, 956, 933, 897, 869, 843, 827, 811, 805, 806, 805, 799, 781, 769, 756, 753, 744]);
line("price", orange, 13, [805, 806]);
line("price", orange, 21, [744, 744, 753, 767, 777, 785, 793, 802, 813, 826]);
line("price", purple, 30, [826, 818, 807, 797, 791, 791, 792, 787, 775, 752, 728, 700, 667, 637, 612, 585, 558, 558, 525, 483, 443, 410, 381, 366]);
line("price", "#000", 0, [1060, 1059, 1048, 1034, 1013, 998, 976, 956, 928, 909, 894, 883, 872, 868, 869, 865, 855, 832, 823, 814, 815, 811, 809, 815, 822, 822, 822, 822, 822, 832, 838, 822, 805, 794, 794, 794, 794, 792, 767, 743, 720, 699, 670, 653, 633, 618, 601, 609, 581, 537, 505, 477, 452, 439]);
line("price", orange, 35, [791, 792]);
line("price", magenta, 0, [1027, 1025, 1022, 1003, 987, 968, 952, 933, 907, 882, 866, 853, 847, 843, 844, 841, 832, 810, 794, 791, 785, 785, 783, 788, 797, 801, 803, 801, 803, 810, 821, 805, 788, 773, 767, 765, 767, 761, 738, 718, 698, 678, 649, 620, 605, 590, 577, 564, 535, 492, 460, 435, 394, 386], "thin");
line("price", magenta, 0, [1079, 1077, 1071, 1058, 1042, 1023, 1003, 980, 958, 933, 912, 897, 887, 885, 891, 891, 881, 866, 851, 841, 837, 833, 831, 831, 837, 839, 839, 839, 849, 857, 867, 869, 847, 825, 819, 813, 814, 812, 802, 783, 753, 728, 702, 675, 657, 642, 629, 636, 643, 605, 553, 517, 487, 479], "thin");

rect("price", 1547, 265, 160, 404, "none", 'stroke="#0c800c" stroke-width="2"');
rect("price", 0, 228, 4000, 4, magenta);
rect("price", 1705, 348, 227, 4, "#9020d0");
rect("price", 1705, 380, 227, 4, "#000");
text("price", 1832, 374, "1.3", 'class="arial" font-size="22" fill="#888"');
text("price", 1960, 390, "&lt; 0:22 (1.3)", 'class="arial" font-size="26"');
text("price", 2357, 1208, "Pips 0.0", 'class="arial" font-size="23" font-weight="bold"');
text("price", 38, 124, "NZDCHF,M5", 'font-size="20"');
out.price += `<path d="M15 114h16l-8 8z"/><path d="M1764 102h18l-9 10z" fill="#778899"/>`;

// sell arrows
for (const i of [43, 46]) {
    const x = X(i);
    out.price += `<path fill="#ff0c20" d="M${x - 3} 488h6v17l8-8v8l-11 11-11-11v-8l8 8z"/>`;
}

// trades
out.price += `<path class="crisp" d="M1574 365L1705 372M1676 290L1702 352M1704 356v16" fill="none" stroke="#900c10" stroke-width="2" stroke-dasharray="6 6"/>
    <path d="M1567 361h4v-6l9 10-9 10v-6h-4z" fill="#ff0c20" stroke="#fff" stroke-width="2"/>
    <path d="M1663 283h4v-6l9 10-9 10v-6h-4z" fill="#ff0c20" stroke="#fff" stroke-width="2"/>
    <path d="M1715 361v19l-8-9z" fill="#ee82ee" stroke="#fff" stroke-width="2"/>`;

// price scale
for (let k = 0; k < 15; k++) {
    const y = Math.round(175 + k * 74.7);
    rect("price-axis", 2466, y - 1, 4, 2, "#000");
    text("price-axis", 2475, y + 7, "0." + (57481 - 30 * k));
}
rect("price-axis", 2462, 528, 6, 230, "#000");
rect("price-axis", 2471, 218, 79, 22, magenta);
text("price-axis", 2475, 236, "0.57459", 'fill="#b0e0e4"');
rect("price-axis", 2471, 340, 79, 22, "#000");
text("price-axis", 2475, 358, "0.57411", 'fill="#b0e0e4"');

// ---- zigzag pane ----
const lo = 1269, hi = 1251;
sparse("zigzag", "#000", [0, lo, 2, lo, 3, hi, 10, hi, 11, lo, 16, lo, 17, hi, 18, hi, 19, lo, 31, lo, 32, hi, 33, lo, 37, lo, 38, hi, 43, hi, 44, lo, 47, lo, 48, hi, 49, hi, 50, lo, 51, lo, 52, hi, 53, lo - 1], "thin");
text("zigzag", 16, 1264, "ZigZagCallRepaintLegs(own version) 0.000000");
text("zigzag-axis", 2471, 1260, "1.5");
text("zigzag-axis", 2471, 1276, "0.00");
text("zigzag-axis", 2471, 1292, "-1.5");

// ---- rsi pane ----
const blue = "#0a1eff", red = "#ff0c14";
for (const y of [1351, 1377, 1403, 1429]) {
    out.rsi += `<path class="crisp" d="M12 ${y}H4000" stroke="#000" stroke-width="2" stroke-dasharray="6 6"/>`;
}
sparse("rsi", blue, [0, 1396, 3, 1394, 6, 1390, 9, 1386, 11, 1384, 13, 1383, 15, 1382, 18, 1381, 22, 1381]);
line("rsi", red, 13, [1384, 1384]);
line("rsi", red, 19, [1380, 1380]);
sparse("rsi", red, [22, 1380, 24, 1382, 28, 1382, 29, 1384, 30, 1384]);
sparse("rsi", blue, [30, 1384, 32, 1383, 33, 1382]);
line("rsi", red, 33, [1382, 1382, 1384, 1384]);
sparse("rsi", blue, [36, 1384, 38, 1382, 40, 1381, 42, 1378, 44, 1376, 46, 1376, 48, 1376, 49, 1374, 52, 1373, 53, 1372]);
line("rsi", red, 46, [1375, 1375]);
line("rsi", red, 0, [1382, 1382]);
line("rsi", blue, 1, [1381, 1366, 1353, 1338, 1335, 1324, 1318, 1311, 1319, 1319]);
line("rsi", red, 10, [1319, 1329, 1330, 1345, 1375, 1367, 1357]);
line("rsi", blue, 16, [1357, 1340, 1353]);
line("rsi", "#000", 17, [1340, 1353], "thin");
line("rsi", red, 18, [1353, 1358, 1373, 1373, 1381, 1397, 1404, 1398, 1393, 1389, 1399, 1419, 1428]);
line("rsi", blue, 30, [1428, 1385, 1363, 1356, 1381]);
line("rsi", red, 34, [1381, 1389, 1401]);
line("rsi", blue, 36, [1401, 1383, 1358, 1344, 1338, 1333, 1323, 1334, 1333, 1332, 1329]);
line("rsi", red, 46, [1329, 1380, 1363]);
line("rsi", blue, 48, [1363, 1347, 1342, 1340, 1339]);
line("rsi", red, 52, [1339, 1348]);
text("rsi", 17, 1327, "rsi div1: rsi Ma (8.00) 61.4839 61.4839 61.4839 70.8280 70.8280 71.8929");
text("rsi-axis", 2471, 1324, "87.5814");
text("rsi-axis", 2470, 1358, "70");
text("rsi-axis", 2470, 1384, "60");
text("rsi-axis", 2470, 1410, "50");
text("rsi-axis", 2471, 1428, "37.7903");
text("rsi-axis", 2470, 1436, "40");

// ---- alert pane: histogram tops ----
const bars = [1462, 1460, 1460, 1448, 1448, 1448, 1446, 1446, 1446, 1446, 1446, 1456, 1458, 1460, 1460, 1460, 1446, 1446, 1446,
    1456, 1456, 1456, 1458, 1460, 1462, 1460, 1460, 1460, 1462, 1462, 1464, 1458, 1448, 1456, 1460, 1462, 1462, 1462,
    1446, 1446, 1446, 1446, 1446, 1446, 1456, 1456, 1442, 1446, 1446, 1446, 1456, 1456, 1446, 1446];
bars.forEach((y, i) => rect("alert", X(i) - 5, y, 10, 1468 - y, "#26ffff"));
for (const y of [1444, 1450, 1454]) rect("alert", 12, y, 4000, 2, "#000");
text("alert", 16, 1462, "Kiosotto 2015 v4 Alert Arrows[mobidik] NZDCHF Per=150 Lev=30 29.0047 0.0345");
text("alert-axis", 2470, 1455, "75");
text("alert-axis", 2470, 1457, "70");
text("alert-axis", 2470, 1461, "45.6528");
text("alert-axis", 2470, 1463, "40.6354");
text("alert-axis", 2470, 1459, "60");
text("alert-axis", 2470, 1471, "0.00");

for (const id in plots) {
    document.getElementById(id).innerHTML = `<g transform="translate(${plots[id].join(",")})">${out[id]}</g>`;
}

// traffic meter in the status bar
let meter = "";
for (let k = 0; k < 8; k++) {
    const h = 20 - k * 2;
    meter += `<rect x="${k * 6}" y="0" width="4" height="${h}" fill="#647c14"/><rect x="${k * 6}" y="${h + 2}" width="4" height="${26 - h}" fill="#144464"/>`;
}
document.getElementById("traffic").innerHTML = meter;
```
